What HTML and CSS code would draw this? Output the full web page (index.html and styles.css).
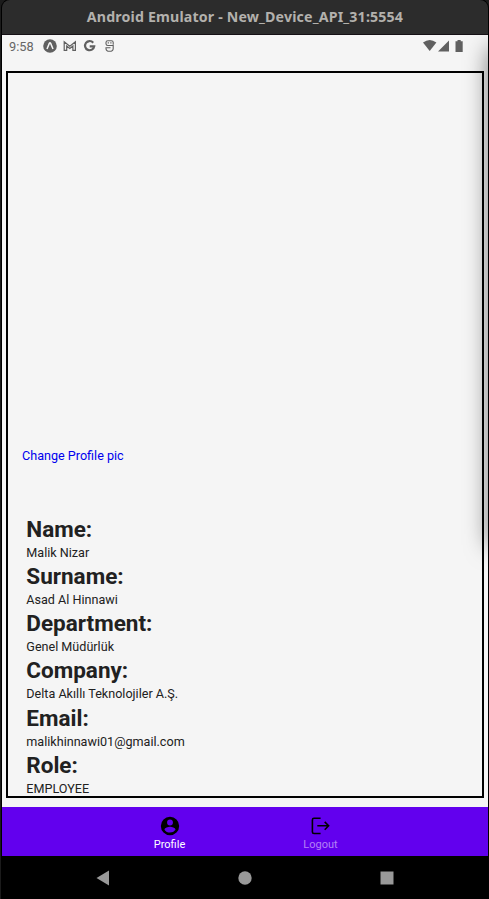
FILE: index.html
```html
<!DOCTYPE html>
<html lang="en">
<head>
<meta charset="utf-8">
<title>Android Emulator</title>
<link rel="stylesheet" href="styles.css">
</head>
<body>
<div class="window">
  <header class="titlebar"><span class="title">Android Emulator - New_Device_API_31:5554</span></header>
  <div class="screen">
    <div class="statusbar">
      <span class="clock">9:58</span>
      <svg class="notifications" width="74" height="16" viewBox="0 0 74 16">
        <circle cx="8" cy="8" r="6.8" fill="#606060"/>
        <path d="M5 11 7.300 5.400Q8 4.200 8.700 5.400L11 11" fill="none" stroke="#f5f5f5" stroke-width="1.500"/>
        <path d="M22.200 12.400V3.800l5.600 4.500 5.600-4.500v8.600h-2.500V8l-3.100 2.500L24.700 8v4.400z" fill="none" stroke="#606060" stroke-width="1.200"/>
        <path d="M51.200 4.700A4.600 4.600 0 1 0 52.200 8.300H47.700" fill="none" stroke="#606060" stroke-width="2.200"/>
        <path d="M71.200 6.800V4.500q0-1.800-1.800-1.800h-3.600Q64 2.700 64 4.500v1.300q0 1.700 1.700 1.700h5.500v2.900q0 2.900-3.600 2.900T64 10.400v-.6h4.500" fill="none" stroke="#606060" stroke-width="1.100"/>
        <path d="M65.700 4.300h1.200v1.200h-1.200zM68.300 4.300h1.200v1.200h-1.200z" fill="#606060"/>
      </svg>
      <svg class="signals" width="44" height="16" viewBox="0 0 44 16">
        <path d="M1 4.600Q7.700-.4 14.400 4.600L7.700 13z" fill="#606060"/>
        <path d="M27 2.500V13.500H16z" fill="#606060"/>
        <path d="M33.500 3.200h2V2h3.200v1.200h2V14h-7.200z" fill="#606060"/>
      </svg>
    </div>
    <main class="card">
      <a class="change">Change Profile pic</a>
      <dl class="details">
        <dt>Name:</dt><dd>Malik Nizar</dd>
        <dt>Surname:</dt><dd>Asad Al Hinnawi</dd>
        <dt>Department:</dt><dd>Genel Müdürlük</dd>
        <dt>Company:</dt><dd>Delta Akıllı Teknolojiler A.Ş.</dd>
        <dt>Email:</dt><dd>malikhinnawi01@gmail.com</dd>
        <dt>Role:</dt><dd>EMPLOYEE</dd>
      </dl>
    </main>
    <div class="shade"></div>
  </div>
  <nav class="tabs">
    <div class="tab active">
      <svg width="22" height="22" viewBox="0 0 24 24"><path fill-rule="evenodd" d="M12 2a10 10 0 1 0 0 20 10 10 0 0 0 0-20zm0 3a3.200 3.200 0 1 1 0 6.400A3.200 3.200 0 0 1 12 5zm0 14.200a7.200 7.200 0 0 1-6-3.220c.03-1.990 4-3.080 6-3.080s5.970 1.090 6 3.080a7.200 7.200 0 0 1-6 3.220z"/></svg>
      <span>Profile</span>
    </div>
    <div class="tab">
      <svg width="22" height="22" viewBox="0 0 22 22"><path d="M10.600 3.300H4Q2.400 3.300 2.400 4.900v12q0 1.600 1.600 1.600h6.600M7.300 10.800h11.400M14.700 6.900l3.900 3.900-3.900 3.900" fill="none" stroke="#000" stroke-width="1.600"/></svg>
      <span>Logout</span>
    </div>
  </nav>
  <footer class="sysnav">
    <svg width="14" height="16" viewBox="0 0 14 16"><path d="M.5 8 13 .5v15z"/></svg>
    <svg width="14" height="14" viewBox="0 0 14 14"><circle cx="7" cy="7" r="6.700"/></svg>
    <svg width="14" height="14" viewBox="0 0 14 14"><path d="M.5.5h13v13H.5z"/></svg>
  </footer>
</div>
</body>
</html>
```
FILE: styles.css
```css
* { box-sizing: border-box; }
body {
  margin: 0;
  height: 899px;
  overflow: hidden;
  background: #1b1b1b;
  font-family: Roboto, "Noto Sans", sans-serif;
}
.window {
  display: flex;
  flex-direction: column;
  height: 899px;
  margin: 0 1px 0 2px;
  border-radius: 8px 8px 0 0;
  background: #000;
  box-shadow: 0 0 0 1px #000;
  overflow: hidden;
}
.titlebar {
  height: 35px;
  background: #2c2c2c;
  border-bottom: 1px solid #151015;
  color: #b3b1ad;
  font: bold 14.200px/34px "Noto Sans", "Open Sans", sans-serif;
  text-align: center;
  white-space: nowrap;
}
.title { letter-spacing: 0.16px; }
.screen {
  position: relative;
  height: 772px;
  background: #f5f5f5;
  overflow: hidden;
}
.statusbar {
  display: flex;
  align-items: center;
  height: 22px;
  padding: 0 22px 0 7px;
  color: #666;
}
.clock { width: 33px; font-size: 12.800px; }
.signals { margin-left: auto; }
.card {
  height: 727px;
  margin: 14px 4px 0 4px;
  padding: 375px 0 0 14px;
  border: 2px solid #000;
}
.change {
  display: block;
  height: 16px;
  color: #0000ee;
  font-size: 12.600px;
  line-height: 16px;
}
.details {
  margin: 49.600px 0 0 4.300px;
  color: #212121;
}
.details dt {
  height: 31px;
  font-size: 22.500px;
  font-weight: bold;
  line-height: 31px;
}
.details dd {
  height: 16.250px;
  margin: 0;
  font-size: 12.600px;
  line-height: 16px;
}
.shade {
  position: absolute;
  top: 15px;
  left: 489px;
  width: 20px;
  height: 494px;
  box-shadow: 0 0 24px 1px rgba(0, 0, 0, .6);
}
.tabs {
  display: flex;
  justify-content: center;
  height: 49px;
  padding-top: 8px;
  background: #6200ee;
}
.tab {
  display: flex;
  flex-direction: column;
  align-items: center;
  width: 151px;
  color: #b380f6;
  font-size: 11px;
  line-height: 15px;
}
.tab.active { color: #fff; }
.sysnav {
  display: flex;
  align-items: center;
  justify-content: space-between;
  height: 43px;
  padding: 0 94.500px 0 93.500px;
  fill: #999;
}
```
